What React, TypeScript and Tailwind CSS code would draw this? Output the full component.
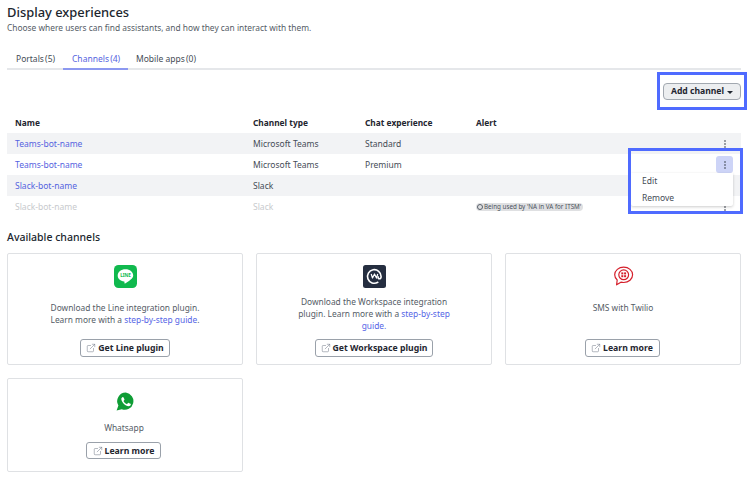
import { ExternalLink } from "lucide-react";

const font = { fontFamily: '"Noto Sans", sans-serif' };

function Kebab() {
  return (
    <svg width="2" height="8" viewBox="0 0 2 8" className="text-[#3f4650]" fill="currentColor">
      <rect x="0.3" y="0.300" width="1.4" height="1.4" />
      <rect x="0.3" y="3.300" width="1.4" height="1.4" />
      <rect x="0.3" y="6.300" width="1.4" height="1.4" />
    </svg>
  );
}

function LineIcon() {
  return (
    <svg width="23" height="23" viewBox="0 0 23 23">
      <rect width="23" height="23" rx="4.5" fill="#10b94e" />
      <path d="M11.5 4.200c-4.400 0-7.800 2.700-7.800 6.200 0 3.100 2.700 5.600 6.400 6.100.6.100.4 1 .3 1.600 0 .4.3.5.7.3 1.400-.8 4-2.300 5.600-3.900 1.400-1.200 2.500-2.500 2.500-4.100 0-3.500-3.400-6.200-7.700-6.200z" fill="#fff" />
      <text x="11.500" y="12" textAnchor="middle" fontSize="4.600" fontWeight="700" fill="#10b94e">LINE</text>
    </svg>
  );
}

function WorkspaceIcon() {
  return (
    <svg width="23" height="23" viewBox="0 0 23 23" fill="none">
      <rect width="23" height="23" rx="2.500" fill="#252e40" />
      <path d="M14.800 17.300a6.800 6.800 0 1 1 3.300-5.800c0 1.500-.8 2.300-1.700 2.300-1 0-1.500-.8-1.200-1.900" stroke="#fff" strokeWidth="1.600" strokeLinecap="round" />
      <path d="M8.200 9l1.300 4 2-4 2 4 1.200-4" stroke="#fff" strokeWidth="1.200" strokeLinejoin="round" />
    </svg>
  );
}

function TwilioIcon() {
  return (
    <svg width="21" height="21" viewBox="0 0 21 21" fill="none">
      <path d="M10.700 1.200c-5 0-9 3.300-9 7.600 0 2.100 1 3.900 2.500 5.200l-.6 4.800 4.300-2.600c.9.200 1.800.3 2.800.3 5 0 8.900-3.400 8.900-7.700s-3.900-7.600-8.900-7.600z" stroke="#d5202c" strokeWidth="1.200" strokeLinejoin="round" />
      <circle cx="10.700" cy="8.800" r="4.900" stroke="#d5202c" strokeWidth="1.200" />
      <rect x="8.300" y="6.400" width="2" height="2" fill="#d5202c" />
      <rect x="11.100" y="6.400" width="2" height="2" fill="#d5202c" />
      <rect x="8.300" y="9.200" width="2" height="2" fill="#d5202c" />
      <rect x="11.100" y="9.200" width="2" height="2" fill="#d5202c" />
    </svg>
  );
}

function WhatsappIcon() {
  return (
    <svg width="19" height="19" viewBox="0 0 19 19">
      <path d="M9.800.6a8.600 8.600 0 0 0-7.400 13L.6 18.600l5.200-1.400A8.600 8.600 0 1 0 9.800.6z" fill="#0f9d35" />
      <path d="M6.800 4.900c-.6.100-1.500 1-1.500 2.200 0 2.800 4.100 7.200 7.300 7.200 1.100 0 2.100-.8 2.200-1.700.1-.4 0-.6-.3-.8l-1.900-.9c-.3-.1-.5 0-.7.200l-.7.900c-.2.200-.4.200-.6.100-1.200-.5-2.400-1.600-3-2.800-.1-.2-.1-.4.100-.6l.6-.7c.2-.2.200-.4.100-.7l-.8-1.900c-.1-.3-.4-.5-.8-.5z" fill="#fff" />
    </svg>
  );
}

function OutlineButton({ label, w, h = "h-[18px]" }: { label: string; w: string; h?: string }) {
  return (
    <button className={`flex ${h} ${w} items-center justify-center gap-[2px] rounded-[3px] border border-[#9aa1aa] bg-white text-[8.700px] font-bold text-[#1f2630]`}>
      <ExternalLink size={10} strokeWidth={1.200} className="text-[#6b7280]" />
      {label}
    </button>
  );
}

function Guide({ children }: { children: string }) {
  return <span className="text-[#5565e6]">{children}</span>;
}

const rows = [
  { name: "Teams-bot-name", type: "Microsoft Teams", exp: "Standard", shade: true },
  { name: "Teams-bot-name", type: "Microsoft Teams", exp: "Premium", open: true },
  { name: "Slack-bot-name", type: "Slack", exp: "", shade: true },
  { name: "Slack-bot-name", type: "Slack", exp: "", disabled: true, alert: true },
];

export default function App() {
  return (
    <div style={font} className="relative h-[481px] w-[750px] overflow-hidden bg-white pl-[7px] pr-[9px] text-[#3f4650]">
      <h1 className="pt-[3px] text-[12.900px] leading-[18px] font-medium text-[#20262e]">Display experiences</h1>
      <p className="text-[8.400px] leading-[14px] text-[#555c66]">Choose where users can find assistants, and how they can interact with them.</p>

      <div className="mt-[16px] flex h-[19px] border-b-2 border-[#e5e7ea] text-[8.500px] text-[#454c56]">
        <div className="w-[56px] pl-[9px] leading-[16px]">Portals <span className="-ml-[1px]">(5)</span></div>
        <div className="-mb-[2px] w-[65px] border-b-2 border-[#8c98f0] pl-[9px] leading-[16px] text-[#5563e0]">Channels <span className="-ml-[1px]">(4)</span></div>
        <div className="pl-[8px] leading-[16px]">Mobile apps <span className="-ml-[1px]">(0)</span></div>
      </div>

      <div className="mt-[13px] flex justify-end">
        <button className="flex h-[17px] w-[78px] items-center justify-center gap-[3px] rounded-[4px] border border-[#a2a8b0] bg-[#eceef0] text-[8.600px] font-bold text-[#1f2630]">
          Add channel
          <span className="mt-[1px] h-0 w-0 border-x-[3px] border-t-[3px] border-x-transparent border-t-[#1f2630]" />
        </button>
      </div>

      <div className="mt-[16px] grid h-[17px] grid-cols-[238px_112px_111px_1fr] pl-[8px] text-[8.350px] leading-[13px] font-bold text-[#1f2630]">
        <div>Name</div>
        <div>Channel type</div>
        <div>Chat experience</div>
        <div>Alert</div>
      </div>

      <div>
        {rows.map((r, i) => (
          <div
            key={i}
            className={`relative grid h-[21px] grid-cols-[238px_112px_111px_1fr] items-center pt-[1px] pl-[8px] text-[8.500px] ${r.shade ? "bg-[#f2f3f5]" : "bg-white"} ${r.disabled ? "text-[#c8cacd]" : "text-[#454c56]"}`}
          >
            <div className={r.disabled ? "" : "text-[#5563e0]"}>{r.name}</div>
            <div>{r.type}</div>
            <div>{r.exp}</div>
            <div>
              {r.alert && (
                <span className="flex h-[8px] w-[107px] items-center gap-[1px] rounded-full bg-[#dfe0e2] pl-[1px] text-[6.250px] whitespace-nowrap text-[#4b525c]">
                  <span className="h-[6px] w-[6px] shrink-0 rounded-full border border-[#5a616b]" />
                  Being used by &apos;NA in VA for ITSM&apos;
                </span>
              )}
            </div>
            <div className={`absolute top-[2px] right-[8px] flex h-[17px] w-[17px] items-center justify-center rounded-[3px] ${r.open ? "bg-[#cdd4f7]" : ""}`}>
              <Kebab />
            </div>
          </div>
        ))}
      </div>

      <h2 className="mt-[13px] text-[10.500px] leading-[15px] font-medium text-[#20262e]">Available channels</h2>

      <div className="mt-[8px] grid grid-cols-3 gap-x-[13px] gap-y-[13px] text-[8.400px] leading-[12px] text-[#555c66]">
        <div className="flex h-[112px] flex-col items-center rounded-[2px] border border-[#dfe1e4] pt-[11px]">
          <LineIcon />
          <p className="mt-[14px] text-center">Download the Line integration plugin.<br />Learn more with a <Guide>step-by-step guide</Guide>.</p>
          <div className="mt-[13px]"><OutlineButton label="Get Line plugin" w="w-[90px]" /></div>
        </div>
        <div className="flex h-[112px] flex-col items-center rounded-[2px] border border-[#dfe1e4] pt-[11px]">
          <WorkspaceIcon />
          <p className="mt-[8px] w-[158px] text-center">Download the Workspace integration plugin. Learn more with a <Guide>step-by-step guide.</Guide></p>
          <div className="mt-[7px]"><OutlineButton label="Get Workspace plugin" w="w-[118px]" /></div>
        </div>
        <div className="flex h-[112px] flex-col items-center rounded-[2px] border border-[#dfe1e4] pt-[12px]">
          <TwilioIcon />
          <p className="mt-[15px] text-center">SMS with Twilio</p>
          <div className="mt-[25px] -ml-[2px]"><OutlineButton label="Learn more" w="w-[75px]" /></div>
        </div>
        <div className="flex h-[94px] flex-col items-center rounded-[2px] border border-[#dfe1e4] pt-[13px]">
          <WhatsappIcon />
          <p className="mt-[11px] -ml-[2px] text-center">Whatsapp</p>
          <div className="mt-[8px] -ml-[3px]"><OutlineButton label="Learn more" w="w-[75px]" h="h-[17px]" /></div>
        </div>
      </div>

      <div className="absolute top-[173px] left-[631px] w-[102px] rounded-b-[2px] bg-white text-[8.500px] text-[#454c56] shadow-[0_1px_3px_rgba(0,0,0,0.2)]">
        <div className="pl-[11px] leading-[16px]">Edit</div>
        <div className="pl-[11px] leading-[17px]">Remove</div>
      </div>

      <div className="absolute top-[72px] left-[657px] h-[38px] w-[90px] border-[3px] border-[#4f6bff]" />
      <div className="absolute top-[148px] left-[628px] h-[66px] w-[115px] border-[3px] border-[#4f6bff]" />
    </div>
  );
}
